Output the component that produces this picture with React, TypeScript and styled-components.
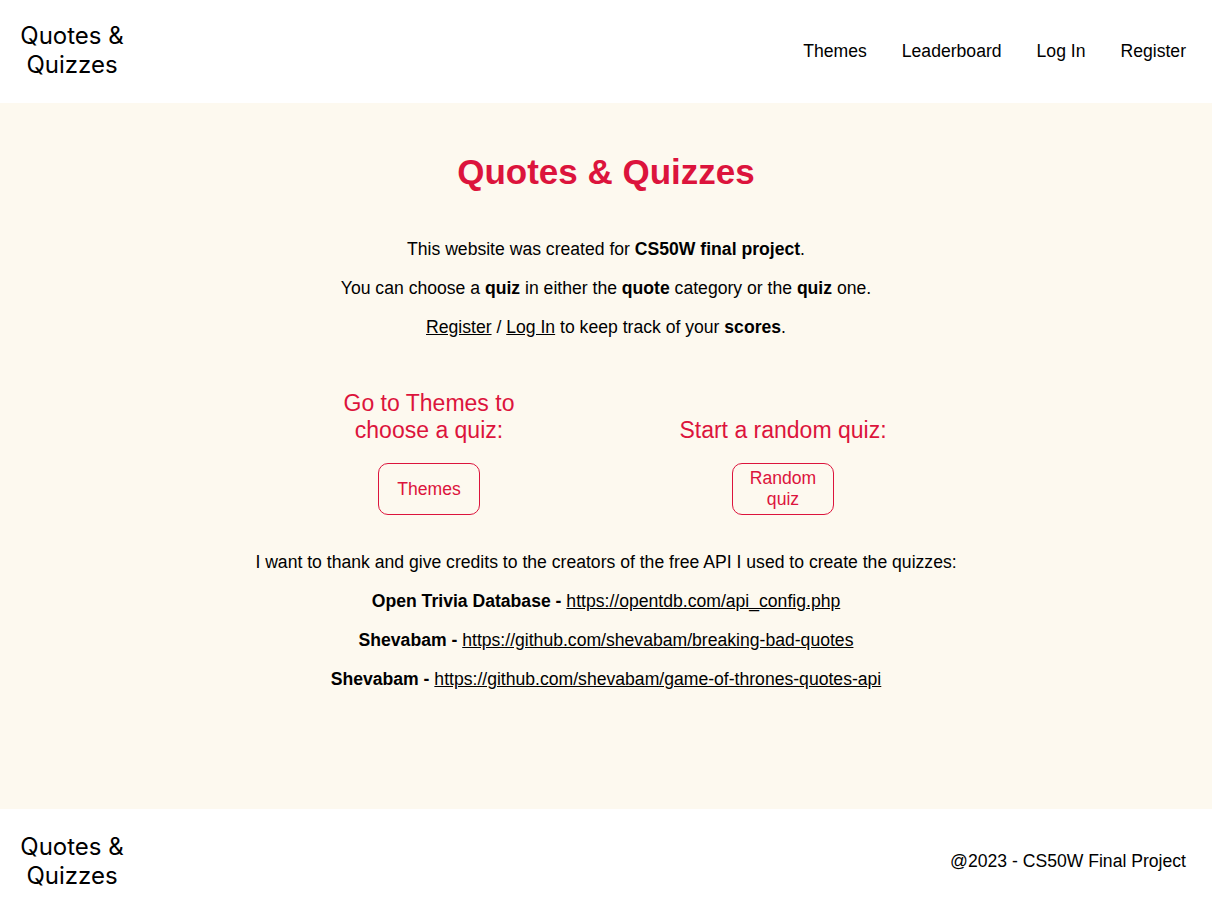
import styled, { createGlobalStyle } from 'styled-components'

const GlobalStyle = createGlobalStyle`
  html, body {
    margin: 0;
    padding: 0;
  }
  body {
    font-family: "Liberation Sans", Arial, sans-serif;
    color: #000;
    background: #fff;
  }
`

const crimson = '#dc143c'

const Bar = styled.header`
  display: flex;
  align-items: center;
  justify-content: space-between;
  height: 103px;
  padding: 0 26px 0 19px;
  box-sizing: border-box;
  background: #fff;
`

const Logo = styled.div<{ $foot?: boolean }>`
  font-family: Inter, "Noto Sans", sans-serif;
  font-size: 24px;
  line-height: 29px;
  text-align: center;
  width: 106px;
  white-space: pre;
  margin-top: ${(p) => (p.$foot ? '0' : '-4px')};
`

const Nav = styled.nav`
  display: flex;
  gap: 35px;
  font-size: 17.6px;
`

const NavLink = styled.a`
  color: #000;
  text-decoration: none;
`

const Main = styled.main`
  background: #fdf9ef;
  height: 706px;
  padding-top: 49px;
  box-sizing: border-box;
  display: flex;
  flex-direction: column;
  align-items: center;
  text-align: center;
`

const Title = styled.h1`
  margin: 0 0 47px;
  font-size: 35px;
  line-height: 40px;
  font-weight: bold;
  color: ${crimson};
`

const Para = styled.p`
  margin: 0 0 18px;
  font-size: 17.6px;
  line-height: 21px;
`

const Link = styled.a`
  color: #000;
  text-decoration: underline;
`

const Choices = styled.div`
  display: grid;
  grid-template-columns: 230px 230px;
  column-gap: 124px;
  row-gap: 19px;
  margin: 34px 0 37px;
`

const ChoiceHead = styled.h2`
  margin: 0;
  align-self: end;
  font-size: 23px;
  line-height: 27px;
  font-weight: normal;
  color: ${crimson};
`

const Button = styled.button`
  justify-self: center;
  width: 102px;
  height: 52px;
  padding: 0 12px;
  border: 1px solid ${crimson};
  border-radius: 10px;
  background: transparent;
  color: ${crimson};
  font-family: "Liberation Sans", Arial, sans-serif;
  font-size: 17.6px;
  line-height: 21px;
  cursor: pointer;
`

const Foot = styled.footer`
  display: flex;
  align-items: center;
  justify-content: space-between;
  height: 96px;
  padding: 8px 26px 0 19px;
  box-sizing: border-box;
  background: #fff;
`

const FootNote = styled.div`
  font-size: 17.6px;
`

export default function App() {
  return (
    <>
      <GlobalStyle />
      <Bar>
        <Logo>{'Quotes &\nQuizzes'}</Logo>
        <Nav>
          <NavLink href="#">Themes</NavLink>
          <NavLink href="#">Leaderboard</NavLink>
          <NavLink href="#">Log In</NavLink>
          <NavLink href="#">Register</NavLink>
        </Nav>
      </Bar>
      <Main>
        <Title>Quotes &amp; Quizzes</Title>
        <Para>
          This website was created for <b>CS50W final project</b>.
        </Para>
        <Para>
          You can choose a <b>quiz</b> in either the <b>quote</b> category or the <b>quiz</b> one.
        </Para>
        <Para>
          <Link href="#">Register</Link> / <Link href="#">Log In</Link> to keep track of your <b>scores</b>.
        </Para>
        <Choices>
          <ChoiceHead>Go to Themes to choose a quiz:</ChoiceHead>
          <ChoiceHead>Start a random quiz:</ChoiceHead>
          <Button>Themes</Button>
          <Button>Random quiz</Button>
        </Choices>
        <Para>
          I want to thank and give credits to the creators of the free API I used to create the quizzes:
        </Para>
        <Para>
          <b>Open Trivia Database - </b>
          <Link href="#">https://opentdb.com/api_config.php</Link>
        </Para>
        <Para>
          <b>Shevabam - </b>
          <Link href="#">https://github.com/shevabam/breaking-bad-quotes</Link>
        </Para>
        <Para>
          <b>Shevabam - </b>
          <Link href="#">https://github.com/shevabam/game-of-thrones-quotes-api</Link>
        </Para>
      </Main>
      <Foot>
        <Logo $foot>{'Quotes &\nQuizzes'}</Logo>
        <FootNote>@2023 - CS50W Final Project</FootNote>
      </Foot>
    </>
  )
}
